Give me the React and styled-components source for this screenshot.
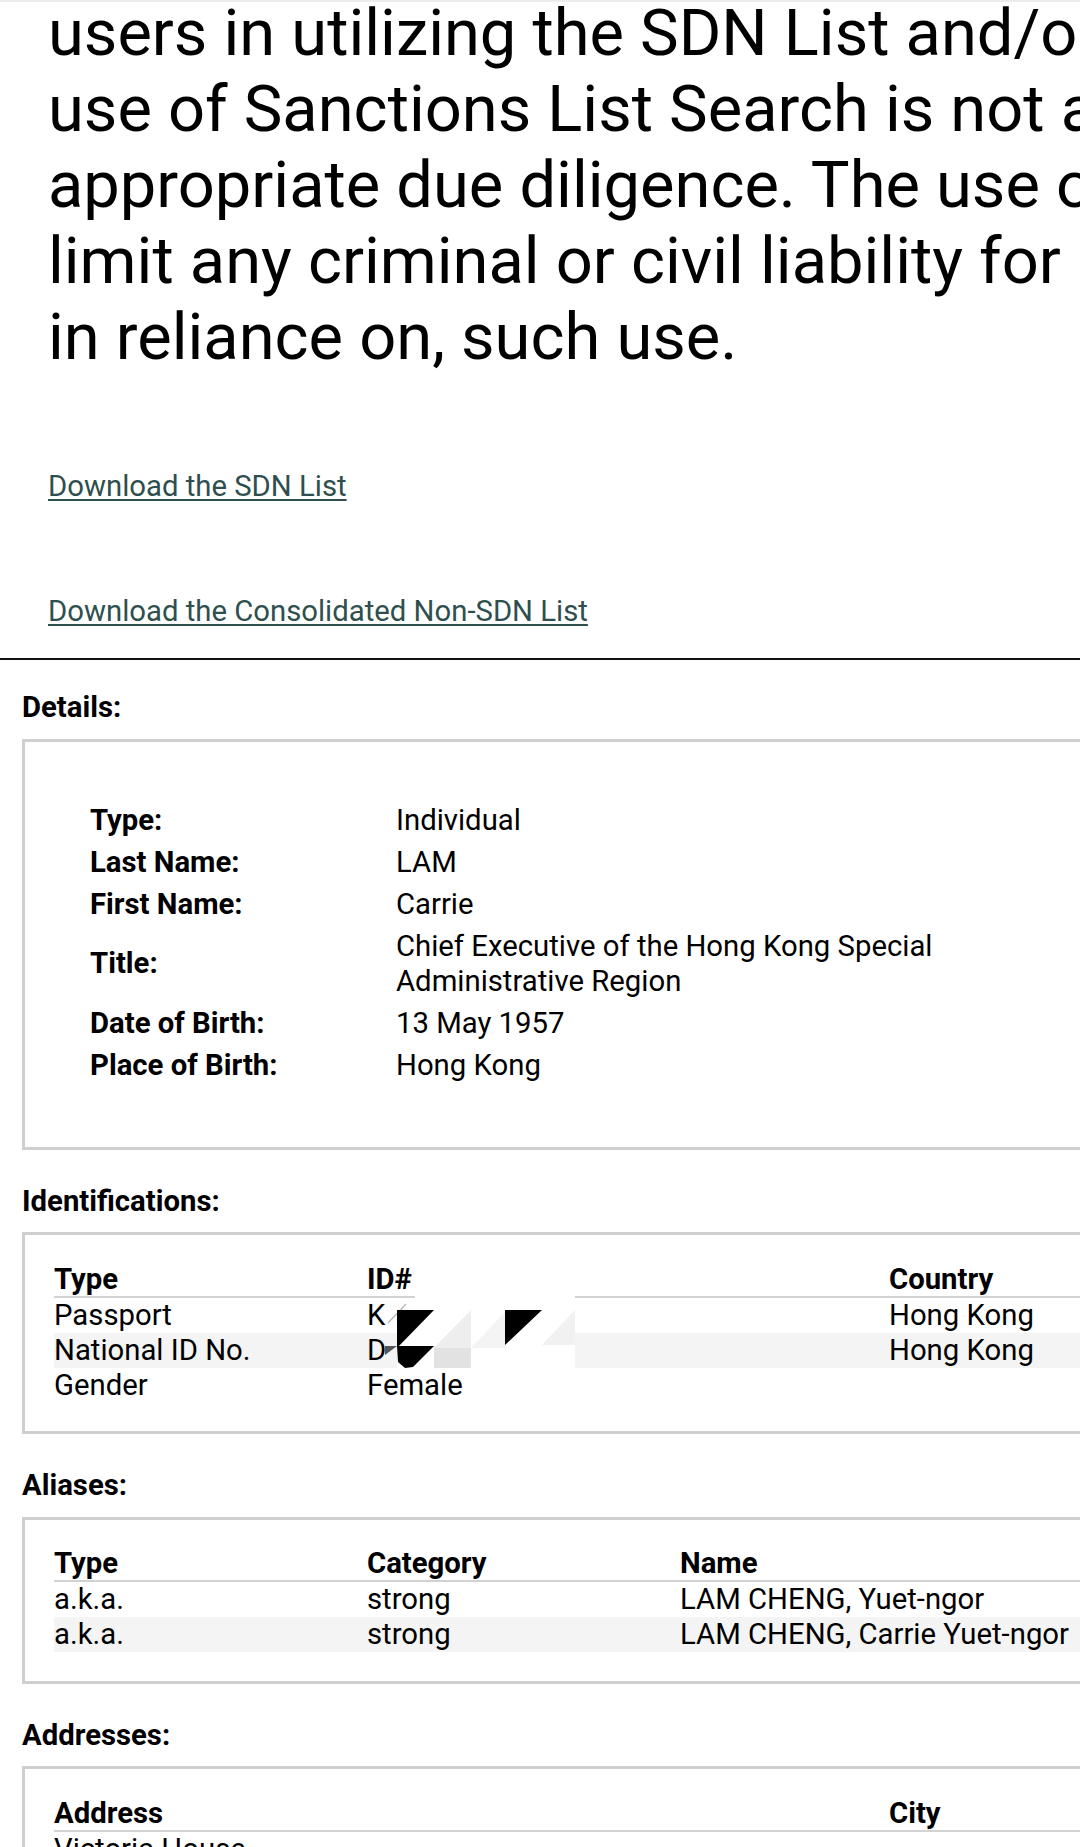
import React from 'react';
import styled, { createGlobalStyle } from 'styled-components';

const GlobalStyle = createGlobalStyle`
  html, body {
    margin: 0;
    padding: 0;
    background: #fff;
    overflow-x: hidden;
  }
  body {
    font-family: Roboto, "Noto Sans", "Liberation Sans", sans-serif;
    color: #000;
  }
`;

const Page = styled.div`
  width: 1080px;
  overflow: hidden;
  border-top: 2px solid #ececec;
`;

const Disclaimer = styled.div`
  margin: -7.3px 0 0 48px;
  font-size: 65px;
  line-height: 76px;
  white-space: nowrap;
`;

const Downloads = styled.div`
  display: flex;
  flex-direction: column;
  align-items: flex-start;
  gap: 90px;
  padding: 94.3px 0 29px 48px;
`;

const DownloadLink = styled.a`
  font-size: 29.3px;
  line-height: 35px;
  color: #2f4f4f;
  text-decoration: underline;
  text-underline-offset: 3px;
`;

const Rule = styled.hr`
  margin: 0;
  border: none;
  height: 2px;
  background: #111;
`;

const Section = styled.section`
  padding: ${p => (p.$first ? '30px' : '34px')} 0 0 22px;
`;

const Heading = styled.h3`
  margin: 0 0 13.5px;
  font-size: 29.3px;
  line-height: 35px;
  font-weight: 700;
`;

const Box = styled.div`
  width: 1400px;
  border: 3px solid #cfcfcf;
  padding: ${p => (p.$details ? '57.5px 0 60.5px 65px' : '26.5px 0 28.5px 29px')};
`;

const Table = styled.table`
  border-collapse: collapse;
  table-layout: fixed;
  width: ${p => p.$width}px;
  font-size: 29.3px;
`;

const Col = styled.col`
  width: ${p => p.$w}px;
`;

const Label = styled.td`
  font-weight: 700;
  padding: 3.5px 0;
  line-height: 35px;
  vertical-align: middle;
`;

const Value = styled.td`
  padding: 3.5px 0;
  line-height: 35px;
  vertical-align: middle;
`;

const Th = styled.th`
  text-align: left;
  font-weight: 700;
  padding: 0;
  line-height: 34px;
  border-bottom: 2px solid #d2d2d2;
`;

const Tr = styled.tr`
  &:nth-child(even) {
    background: #f4f4f4;
  }
`;

const Td = styled.td`
  padding: 0;
  line-height: 35px;
  white-space: ${p => (p.$wrap ? 'normal' : 'nowrap')};
  vertical-align: middle;
  position: relative;
`;

const Redaction = styled.svg`
  position: absolute;
  left: 18px;
  top: -5px;
  width: 190px;
  height: 75px;
`;

const RedactedId = () => (
  <Redaction viewBox="0 0 190 75">
    <rect x="30" y="0" width="160" height="17" fill="#fff" />
    <rect x="12" y="17" width="178" height="58" fill="#fff" />
    <line x1="3" y1="30" x2="21" y2="11" stroke="#b5b5b5" strokeWidth="1.2" />
    <polygon points="0,53 12,53 0,62" fill="#555" />
    <polygon points="12,17 49,17 12,55" fill="#000" />
    <polygon points="12,53 49,53 28,74 20,75 13,69" fill="#000" />
    <rect x="49" y="53" width="37" height="22" fill="#e2e2e2" />
    <polygon points="49,55 86,17 86,55" fill="#eeeeee" />
    <polygon points="86,55 120,19 120,55" fill="#f4f4f4" />
    <polygon points="120,17 157,17 120,52" fill="#000" />
    <polygon points="157,52 190,17 190,52" fill="#f1f1f1" />
  </Redaction>
);

const details = [
  ['Type:', 'Individual'],
  ['Last Name:', 'LAM'],
  ['First Name:', 'Carrie'],
  ['Title:', 'Chief Executive of the Hong Kong Special Administrative Region'],
  ['Date of Birth:', '13 May 1957'],
  ['Place of Birth:', 'Hong Kong'],
];

const aliases = [
  ['a.k.a.', 'strong', 'LAM CHENG, Yuet-ngor'],
  ['a.k.a.', 'strong', 'LAM CHENG, Carrie Yuet-ngor'],
];

export default function App() {
  return (
    <Page>
      <GlobalStyle />
      <Disclaimer>
        <div>users in utilizing the SDN List and/or the various non-SDN lists; the</div>
        <div>use of Sanctions List Search is not a substitute for undertaking</div>
        <div>appropriate due diligence. The use of Sanctions List Search does not</div>
        <div>limit any criminal or civil liability for any act undertaken as a result of, or</div>
        <div>in reliance on, such use.</div>
      </Disclaimer>

      <Downloads>
        <DownloadLink href="#sdn">Download the SDN List</DownloadLink>
        <DownloadLink href="#cons">Download the Consolidated Non-SDN List</DownloadLink>
      </Downloads>

      <Rule />

      <Section $first>
        <Heading>Details:</Heading>
        <Box $details>
          <Table $width={906}>
            <colgroup>
              <Col $w={306} />
              <Col $w={600} />
            </colgroup>
            <tbody>
              {details.map(([k, v]) => (
                <tr key={k}>
                  <Label>{k}</Label>
                  <Value>{v}</Value>
                </tr>
              ))}
            </tbody>
          </Table>
        </Box>
      </Section>

      <Section>
        <Heading>Identifications:</Heading>
        <Box>
          <Table $width={1360}>
            <colgroup>
              <Col $w={313} />
              <Col $w={522} />
              <Col $w={300} />
              <Col $w={225} />
            </colgroup>
            <thead>
              <tr>
                <Th>Type</Th>
                <Th>ID#</Th>
                <Th>Country</Th>
                <Th>Expire Date</Th>
              </tr>
            </thead>
            <tbody>
              <Tr>
                <Td>Passport</Td>
                <Td>
                  K
                  <RedactedId />
                </Td>
                <Td>Hong Kong</Td>
                <Td></Td>
              </Tr>
              <Tr>
                <Td>National ID No.</Td>
                <Td>D</Td>
                <Td>Hong Kong</Td>
                <Td></Td>
              </Tr>
              <Tr>
                <Td>Gender</Td>
                <Td>Female</Td>
                <Td></Td>
                <Td></Td>
              </Tr>
            </tbody>
          </Table>
        </Box>
      </Section>

      <Section>
        <Heading>Aliases:</Heading>
        <Box>
          <Table $width={1360}>
            <colgroup>
              <Col $w={313} />
              <Col $w={313} />
              <Col $w={734} />
            </colgroup>
            <thead>
              <tr>
                <Th>Type</Th>
                <Th>Category</Th>
                <Th>Name</Th>
              </tr>
            </thead>
            <tbody>
              {aliases.map((a, i) => (
                <Tr key={i}>
                  <Td>{a[0]}</Td>
                  <Td>{a[1]}</Td>
                  <Td>{a[2]}</Td>
                </Tr>
              ))}
            </tbody>
          </Table>
        </Box>
      </Section>

      <Section>
        <Heading>Addresses:</Heading>
        <Box>
          <Table $width={1360}>
            <colgroup>
              <Col $w={835} />
              <Col $w={300} />
              <Col $w={225} />
            </colgroup>
            <thead>
              <tr>
                <Th>Address</Th>
                <Th>City</Th>
                <Th>Country</Th>
              </tr>
            </thead>
            <tbody>
              <Tr>
                <Td $wrap>
                  Victoria House
                  <br />
                  15 Barker Road
                  <br />
                  The Peak
                </Td>
                <Td>Hong Kong</Td>
                <Td>Hong Kong</Td>
              </Tr>
            </tbody>
          </Table>
        </Box>
      </Section>
    </Page>
  );
}
